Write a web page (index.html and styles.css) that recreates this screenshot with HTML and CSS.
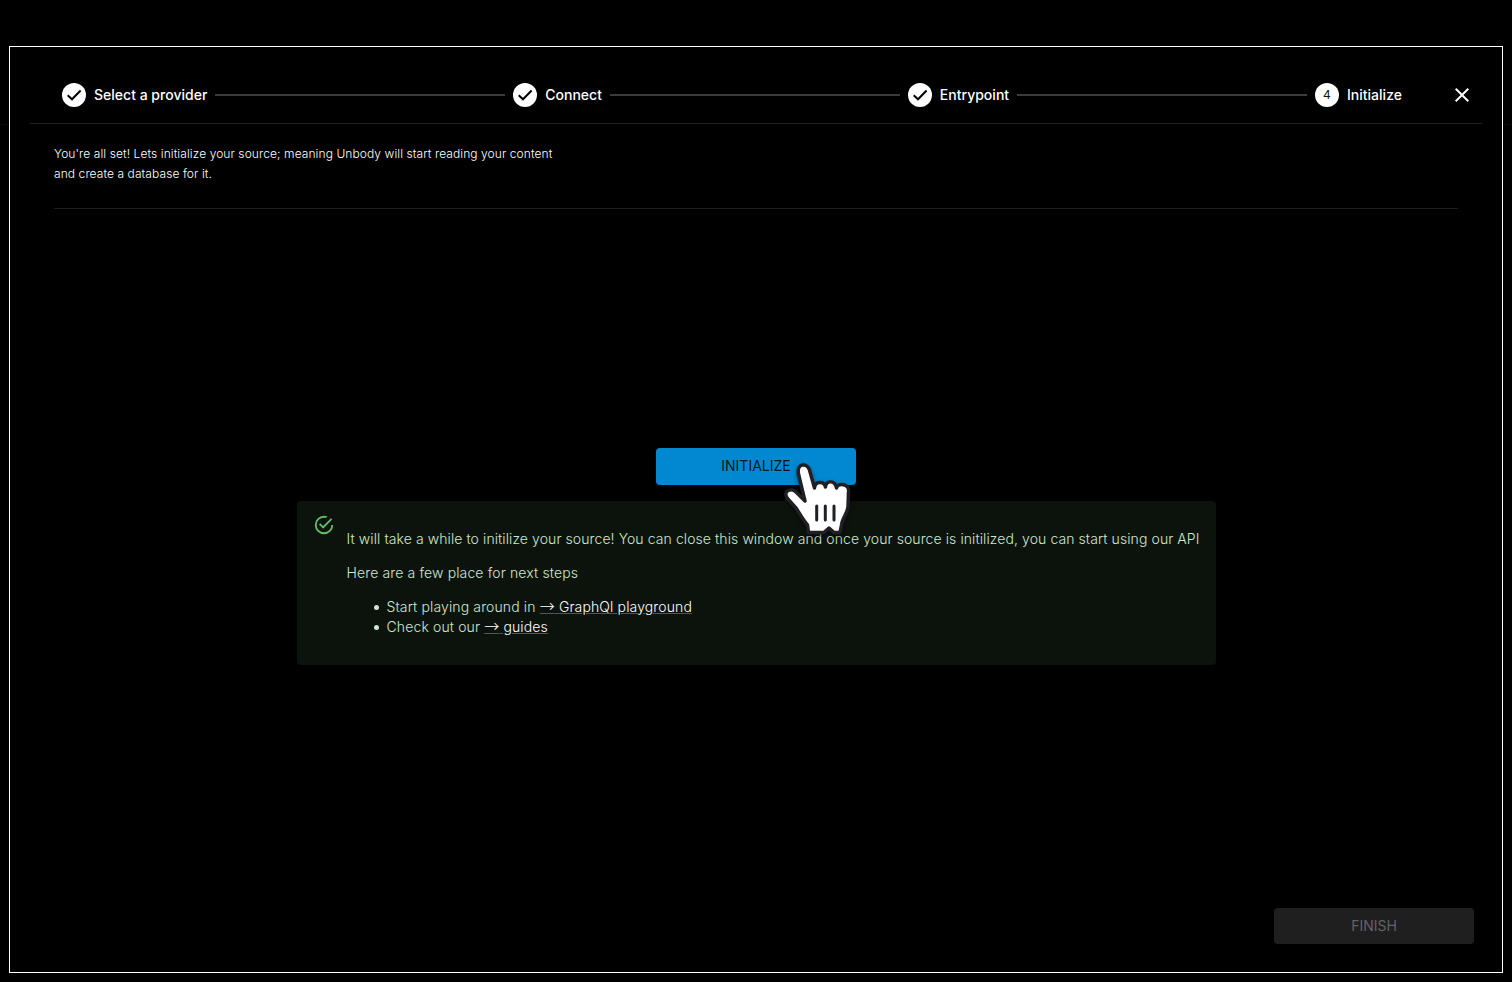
FILE: index.html
```html
<!DOCTYPE html>
<html lang="en">
<head>
<meta charset="utf-8">
<title>Initialize source</title>
<link rel="stylesheet" href="styles.css">
</head>
<body>
<main class="modal">
  <header class="header">
    <ol class="stepper">
      <li class="step"><svg class="step-icon" viewBox="0 0 24 24"><circle cx="12" cy="12" r="12"/><path d="M5.7 12.2l4.3 4.1 8.6-8.8"/></svg><span>Select a provider</span></li>
      <li class="connector"></li>
      <li class="step"><svg class="step-icon" viewBox="0 0 24 24"><circle cx="12" cy="12" r="12"/><path d="M5.7 12.2l4.3 4.1 8.6-8.8"/></svg><span>Connect</span></li>
      <li class="connector"></li>
      <li class="step"><svg class="step-icon" viewBox="0 0 24 24"><circle cx="12" cy="12" r="12"/><path d="M5.7 12.2l4.3 4.1 8.6-8.8"/></svg><span>Entrypoint</span></li>
      <li class="connector"></li>
      <li class="step"><span class="step-number">4</span><span>Initialize</span></li>
    </ol>
    <button class="close" aria-label="Close"><svg viewBox="0 0 24 24"><path d="M19 6.41 17.59 5 12 10.59 6.41 5 5 6.41 10.59 12 5 17.59 6.41 19 12 13.41 17.59 19 19 17.59 13.41 12z"/></svg></button>
  </header>
  <section class="intro">
    <p>You're all set! Lets initialize your source; meaning Unbody will start reading your content<br>and create a database for it.</p>
  </section>
  <section class="content">
    <div class="action">
      <button class="button primary">INITIALIZE</button>
      <svg class="pointer" viewBox="0 0 70 80"><path d="M21 36L15.500 13C13.500 2 24 1.500 26.500 9L31.500 27C32 20 41 19.500 42.500 26C43 19 52 19 53.500 27C55 21 67 23 65.500 31L65 46C64 53 59 58 58.500 64L57 71.500L51 71.500L46 67L41 71.500L25.500 71.500L24.500 64C20 59 17 53 13 47L4 37C-.5 29.500 9 26.500 13 31L22 40Z"/><path class="finger-lines" d="M33.700 45v14M42.300 45v14M51 45v14"/></svg>
    </div>
    <div class="alert">
      <svg class="alert-icon" viewBox="0 0 24 24"><path d="M20,12A8,8 0 0,1 12,20A8,8 0 0,1 4,12A8,8 0 0,1 12,4C12.76,4 13.5,4.11 14.2,4.31L15.77,2.74C14.61,2.26 13.34,2 12,2A10,10 0 0,0 2,12A10,10 0 0,0 12,22A10,10 0 0,0 22,12M7.91,10.08L6.5,11.5L11,16L21,6L19.59,4.58L11,13.17L7.91,10.08Z"/></svg>
      <div class="message">
        <p class="notice">It will take a while to initilize your source! You can close this window and once your source is initilized, you can start using our API</p>
        <p>Here are a few place for next steps</p>
        <ul>
          <li>Start playing around in <a><span class="arrow">→</span> GraphQl playground</a></li>
          <li>Check out our <a><span class="arrow">→</span> guides</a></li>
        </ul>
      </div>
    </div>
  </section>
  <footer class="footer"><button class="button" disabled>FINISH</button></footer>
</main>
</body>
</html>
```
FILE: styles.css
```css
* { box-sizing: border-box; }
body {
  margin: 0;
  height: 982px;
  padding: 46px 9px 9px;
  background: linear-gradient(#090909, #090909) 0 124px / 100% 1px no-repeat #000;
  color: #fff;
  font: 400 14px/20px Inter, sans-serif;
}
.modal {
  display: flex;
  flex-direction: column;
  height: 927px;
  border: 1px solid #fff;
  padding: 20px;
  background: #000;
}
.header {
  display: flex;
  align-items: center;
  height: 57px;
  padding: 0 8px 0 32px;
  border-bottom: 1px solid #222;
}
.stepper {
  display: flex;
  flex: 1;
  align-items: center;
  gap: 8px;
  margin: 0;
  padding: 0;
  list-style: none;
}
.step {
  display: flex;
  align-items: center;
  gap: 8px;
  font-weight: 450;
  letter-spacing: .01px;
}
.step-icon { display: block; width: 24px; height: 24px; fill: #fff; }
.step-icon path { fill: none; stroke: #000; stroke-width: 2; }
.step-number {
  display: grid;
  place-items: center;
  width: 24px;
  height: 24px;
  border-radius: 50%;
  background: #fff;
  color: #111;
  font-size: 12px;
  font-weight: 400;
}
.connector { flex: 1; height: 2px; background: #3b3b3b; }
.close {
  margin-left: 48px;
  padding: 0;
  border: 0;
  background: none;
}
.close svg { display: block; width: 24px; height: 24px; fill: #fff; }
.intro {
  height: 85px;
  margin: 0 24px;
  padding-top: 20px;
  border-bottom: 1px solid #1f1f1f;
  font-size: 12px;
  font-weight: 300;
  letter-spacing: .085px;
}
.intro p { margin: 0; }
.content {
  display: flex;
  flex: 1;
  flex-direction: column;
  align-items: center;
  justify-content: center;
  gap: 16px;
  padding-bottom: 4px;
}
.action { position: relative; display: flex; }
.button {
  width: 200px;
  height: 36.5px;
  padding: 0;
  border: 0;
  border-radius: 4px;
  background: #1f1f1f;
  color: #636363;
  font: 400 14px/24px Inter, sans-serif;
}
.primary { background: #0288d1; color: #06131c; }
.pointer {
  position: absolute;
  z-index: 1;
  left: 127px;
  top: 13px;
  width: 70px;
  height: 80px;
  overflow: visible;
  fill: #fff;
  stroke: #202024;
  stroke-width: 3.5;
  stroke-linejoin: round;
  filter: drop-shadow(0 2px 2px rgba(0, 0, 0, .5));
}
.finger-lines { stroke-width: 3; stroke-linecap: round; }
.alert {
  display: flex;
  padding: 6px 16px;
  border-radius: 4px;
  background: #0c130d;
  color: #cce8cd;
  font-weight: 300;
  letter-spacing: .13px;
}
.notice { letter-spacing: .087px; }
.alert-icon { width: 22px; height: 22px; margin: 7px 12px 0 0; fill: #66bb6a; }
.message { padding: 8px 0; white-space: nowrap; }
.message p { margin: 14px 0; }
.message ul { margin: 14px 0; padding-left: 40px; list-style: none; }
.message li { position: relative; }
.message li::before {
  content: "";
  position: absolute;
  left: -13px;
  top: 8px;
  width: 5px;
  height: 5px;
  border-radius: 50%;
  background: #cce8cd;
}
.message a { color: #fff; text-decoration: underline #555; }
.arrow { font-family: "Noto Sans CJK SC", sans-serif; font-size: 15px; line-height: 1; }
.footer { display: flex; justify-content: flex-end; padding: 0 8px 8px 0; }
```
